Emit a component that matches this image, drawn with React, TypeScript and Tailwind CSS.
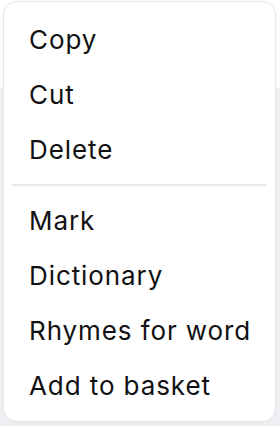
import React from "react";

const groups = [
  ["Copy", "Cut", "Delete"],
  ["Mark", "Dictionary", "Rhymes for word", "Add to basket"],
];

export default function App() {
  return (
    <div
      className="relative h-[426px] w-[280px] overflow-hidden bg-white"
      style={{ fontFamily: "Inter, 'Noto Sans', sans-serif" }}
    >
      <div className="mt-[88px] h-[338px] w-full bg-[#eef0f3]" />

      <div className="absolute left-[3px] top-[1px] flex h-[421px] w-[273px] flex-col rounded-[14px] border border-[#e6e8ec] bg-white py-[10px] shadow-[0_1px_3px_rgba(0,0,0,0.04)]">
        {groups.map((items, gi) => (
          <React.Fragment key={gi}>
            {gi > 0 && (
              <div className="mx-[8px] my-[7px] h-[2px] shrink-0 bg-[#e7e9ed]" />
            )}
            {items.map((label) => (
              <MenuItem key={label}>{label}</MenuItem>
            ))}
          </React.Fragment>
        ))}
      </div>
    </div>
  );
}

function MenuItem({ children }: { children: React.ReactNode }) {
  return (
    <div className="flex h-[55px] shrink-0 items-center whitespace-nowrap pl-[25px] pr-[12px] text-[26px] leading-none tracking-[0.035em] text-[#111111]">
      {children}
    </div>
  );
}
